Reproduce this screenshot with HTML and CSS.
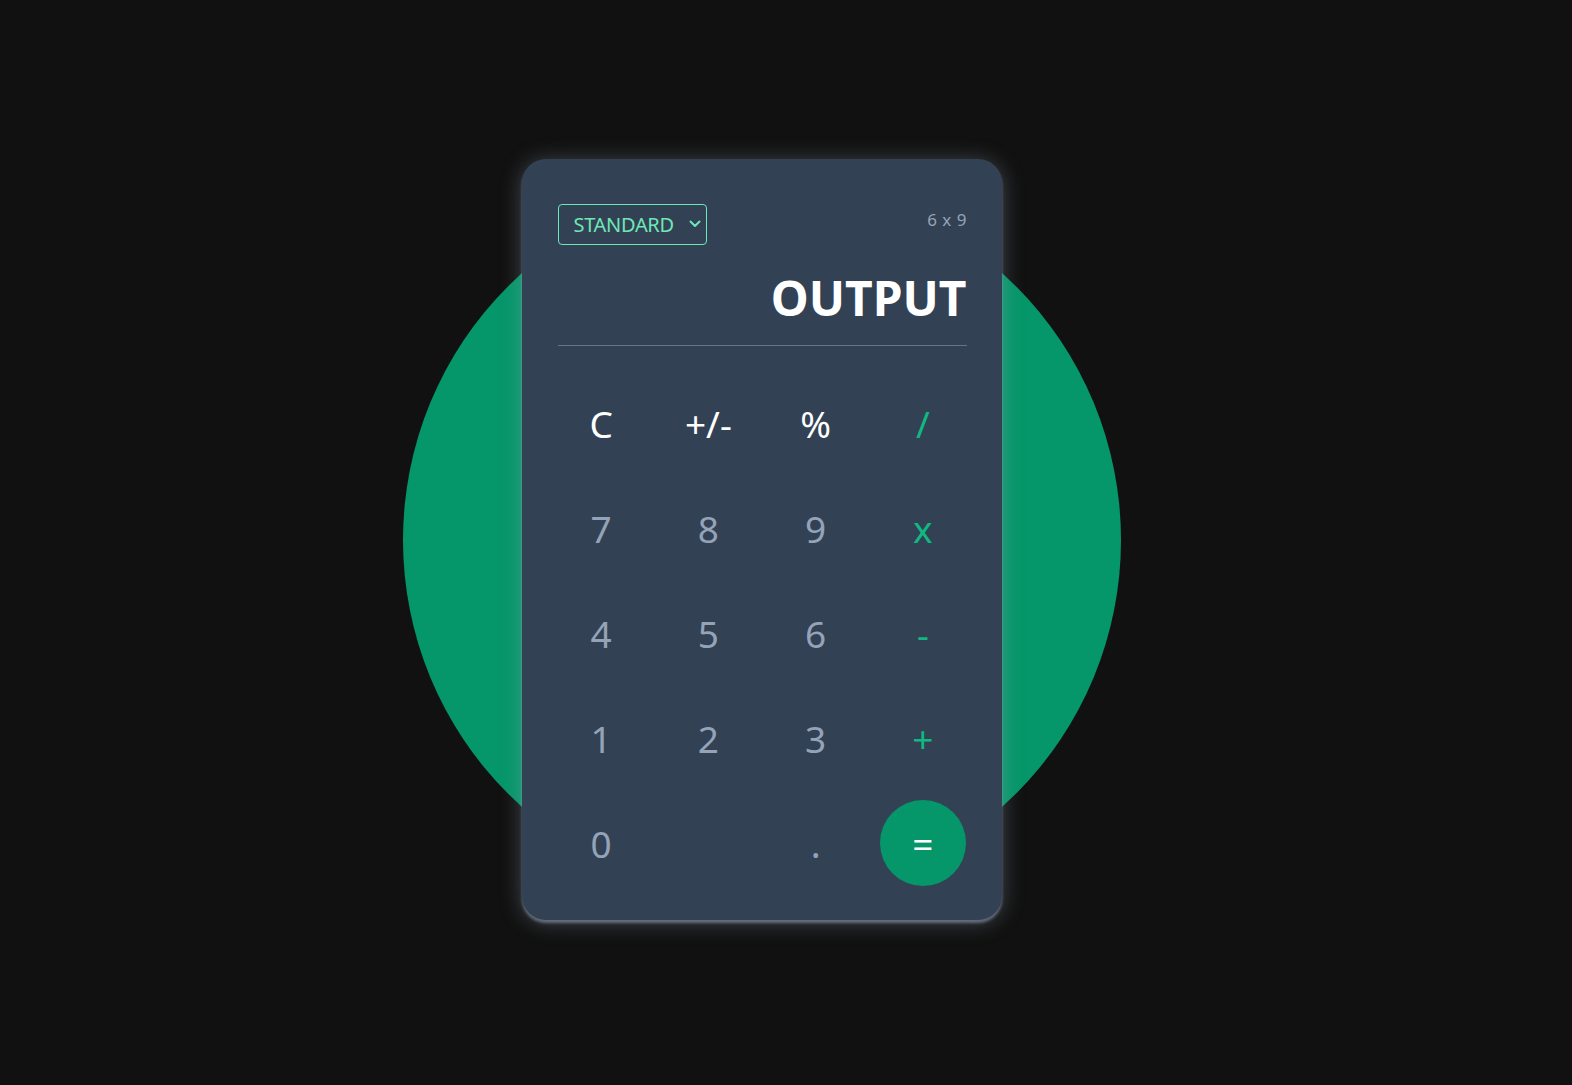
FILE: index.html
```html
<!DOCTYPE html>
<html lang="en">
<head>
<meta charset="utf-8">
<title>Calculator</title>
<link rel="stylesheet" href="styles.css">
</head>
<body>
<main class="stage">
  <div class="scene">
    <div class="blob"></div>
    <section class="calc">
      <header class="calc-head">
        <div class="mode">
          <select class="mode-select">
            <option>STANDARD</option>
            <option>SCIENTIFIC</option>
          </select>
          <svg class="mode-chevron" width="12" height="8" viewBox="0 0 12 8" aria-hidden="true">
            <polyline points="1.5,1.5 6,6 10.5,1.5" fill="none" stroke="#6ee7b7" stroke-width="2" stroke-linecap="round" stroke-linejoin="round"/>
          </svg>
        </div>
        <span class="size">6 x 9</span>
      </header>
      <div class="output">OUTPUT</div>
      <div class="keys">
        <button class="key key-fn">C</button>
        <button class="key key-fn">+/-</button>
        <button class="key key-fn">%</button>
        <button class="key key-op">/</button>

        <button class="key">7</button>
        <button class="key">8</button>
        <button class="key">9</button>
        <button class="key key-op">x</button>

        <button class="key">4</button>
        <button class="key">5</button>
        <button class="key">6</button>
        <button class="key key-op">-</button>

        <button class="key">1</button>
        <button class="key">2</button>
        <button class="key">3</button>
        <button class="key key-op">+</button>

        <button class="key">0</button>
        <div class="key-empty"></div>
        <button class="key">.</button>
        <button class="key key-eq">=</button>
      </div>
    </section>
  </div>
</main>
</body>
</html>
```

FILE: styles.css
```css
* { box-sizing: border-box; }

html, body {
  margin: 0;
  padding: 0;
  background: #111111;
  font-family: "Noto Sans", "Open Sans", sans-serif;
}

.stage {
  height: 100vh;
  display: flex;
  align-items: center;
  justify-content: center;
  padding-right: 49px;
  padding-bottom: 6px;
}

.scene {
  position: relative;
  width: 480px;
}

.blob {
  position: absolute;
  left: 50%;
  top: 50%;
  width: 718px;
  height: 718px;
  margin-left: -359px;
  margin-top: -359px;
  border-radius: 50%;
  background: #059669;
  z-index: 0;
}

.calc {
  position: relative;
  z-index: 1;
  background: #334155;
  border-radius: 24px;
  padding: 45px 35px 34px 36px;
  box-shadow: 0 2px 22px rgba(148, 163, 184, 0.38), 0 3px 3px 0 rgba(148, 163, 184, 0.55);
}

.calc-head {
  height: 41px;
  display: flex;
  justify-content: space-between;
  align-items: flex-start;
}

.mode {
  position: relative;
  width: 149px;
  height: 41px;
}

.mode-select {
  appearance: none;
  -webkit-appearance: none;
  width: 100%;
  height: 100%;
  background: transparent;
  border: 1px solid #6ee7b7;
  border-radius: 4px;
  color: #6ee7b7;
  font-family: "Noto Sans", "Open Sans", sans-serif;
  font-size: 20px;
  letter-spacing: -0.015em;
  padding: 0 30px 0 15px;
  outline: none;
}

.mode-chevron {
  position: absolute;
  left: 131px;
  top: 16px;
  pointer-events: none;
}

.size {
  color: #94a3b8;
  font-size: 17px;
  line-height: 24px;
  padding-top: 4px;
  word-spacing: 1px;
}

.output {
  color: #ffffff;
  font-weight: 700;
  font-size: 48px;
  line-height: 48px;
  text-align: right;
  padding: 29px 0 23px;
  border-bottom: 1px solid #64748b;
}

.keys {
  margin-top: 34px;
  display: grid;
  grid-template-columns: repeat(4, 1fr);
  column-gap: 20px;
  row-gap: 19px;
}

.key {
  height: 86px;
  display: flex;
  align-items: center;
  justify-content: center;
  background: transparent;
  border: none;
  padding: 0;
  color: #94a3b8;
  font-family: "Noto Sans", "Open Sans", sans-serif;
  font-size: 37px;
  cursor: pointer;
}

.key-fn { color: #ffffff; }

.key-op { color: #10b981; }

.key-eq {
  width: 86px;
  justify-self: center;
  border-radius: 50%;
  background: #059669;
  color: #ffffff;
}
```
